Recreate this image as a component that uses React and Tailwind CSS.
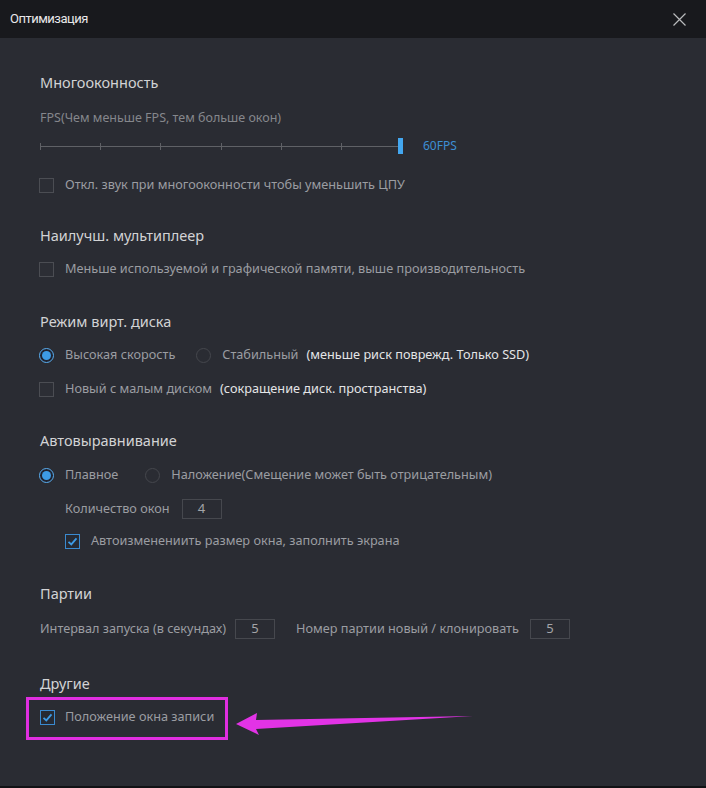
import { useState } from "react";

function Check({ checked }) {
    return (
        <span
            className={`flex h-[15px] w-[15px] shrink-0 items-center justify-center border ${
                checked ? "border-[#3a8ad0] bg-[#262a33]" : "border-[#4b4d53] bg-[#2c2e35]"
            }`}
        >
            {checked && (
                <svg width="11" height="11" viewBox="0 0 11 11">
                    <path d="M1.5 5.8 L4.3 8.4 L9.5 2.4" fill="none" stroke="#3d9be6" strokeWidth="1.8" />
                </svg>
            )}
        </span>
    );
}

function Radio({ checked }) {
    return (
        <span
            className={`flex h-[15px] w-[15px] shrink-0 items-center justify-center rounded-full border ${
                checked ? "border-[#5aaef0] bg-[#1f2330]" : "border-[#45474d]"
            }`}
        >
            {checked && <span className="h-[9px] w-[9px] rounded-full bg-[#3d9be6]" />}
        </span>
    );
}

function Heading({ children, className = "" }) {
    return <div className={`h-[20px] text-[14.5px] leading-[20px] text-[#d2d3d5] ${className}`}>{children}</div>;
}

function Box({ value }) {
    return (
        <span className="flex h-[20px] w-[40px] items-center justify-center border border-[#46484e] text-[13px] text-[#a3a4a8]">
            {value}
        </span>
    );
}

export default function App() {
    const [fps] = useState(60);
    const ticks = [0, 1, 2, 3, 4, 5];

    return (
        <div
            className="relative h-[788px] w-[706px] overflow-hidden border-b-2 border-[#111215] bg-[#2a2c33] text-[12.7px] text-[#9b9da2]"
            style={{ fontFamily: '"Noto Sans", "Open Sans", sans-serif' }}
        >
            <div className="flex h-[38px] items-center justify-between bg-[#18191d] pl-[10px] pr-[20px]">
                <span className="text-[13px] tracking-[-0.5px] text-[#e8e8ea]" style={{ fontFamily: "Roboto, sans-serif" }}>
                    Оптимизация
                </span>
                <svg width="13" height="13" viewBox="0 0 13 13">
                    <path d="M0.5 0.5 L12.5 12.5 M12.5 0.5 L0.5 12.5" stroke="#b9babd" strokeWidth="1.2" />
                </svg>
            </div>

            <div className="flex flex-col pl-[40px] pt-[34px]">
                <Heading>Многооконность</Heading>
                <div className="mt-[18px] h-[16px] text-[12.5px] leading-[16px] text-[#85878c]">
                    FPS(Чем меньше FPS, тем больше окон)
                </div>
                <div className="mt-[12px] flex h-[16px] items-center">
                    <div className="relative flex h-[16px] w-[358px] items-center">
                        <div className="h-px w-full bg-[#5f6166]" />
                        <div className="absolute inset-0 flex items-center justify-between pr-[56px]">
                            {ticks.map((t) => (
                                <span key={t} className="h-[7px] w-px bg-[#5f6166]" />
                            ))}
                        </div>
                    </div>
                    <span className="h-[16px] w-[5px] bg-[#43a7f0]" />
                    <span className="ml-[20px] text-[12px] text-[#3d8fd3]">{fps}FPS</span>
                </div>
                <label className="mt-[23px] flex h-[16px] items-center gap-[11px] -ml-px">
                    <Check />
                    Откл. звук при многооконности чтобы уменьшить ЦПУ
                </label>

                <Heading className="mt-[32px]">Наилучш. мультиплеер</Heading>
                <label className="mt-[16px] flex h-[16px] items-center gap-[11px] -ml-px">
                    <Check />
                    Меньше используемой и графической памяти, выше производительность
                </label>

                <Heading className="mt-[34px]">Режим вирт. диска</Heading>
                <div className="mt-[16px] flex h-[16px] items-center -ml-px">
                    <Radio checked />
                    <span className="ml-[11px]">Высокая скорость</span>
                    <span className="ml-[21px]">
                        <Radio />
                    </span>
                    <span className="ml-[11px]">Стабильный</span>
                    <span className="ml-[8px] text-[#e4e5e7]">(меньше риск поврежд. Только SSD)</span>
                </div>
                <div className="mt-[18px] flex h-[16px] items-center -ml-px">
                    <Check />
                    <span className="ml-[11px]">Новый с малым диском</span>
                    <span className="ml-[8px] text-[#e4e5e7]">(сокращение диск. пространства)</span>
                </div>

                <Heading className="mt-[33px]">Автовыравнивание</Heading>
                <div className="mt-[17px] flex h-[16px] items-center -ml-px">
                    <Radio checked />
                    <span className="ml-[11px]">Плавное</span>
                    <span className="ml-[27px]">
                        <Radio />
                    </span>
                    <span className="ml-[11px]">Наложение(Смещение может быть отрицательным)</span>
                </div>
                <div className="ml-[25px] mt-[16px] flex h-[20px] items-center gap-[12px]">
                    Количество окон
                    <Box value="4" />
                </div>
                <label className="ml-[25px] mt-[14px] flex h-[16px] items-center gap-[11px]">
                    <Check checked />
                    Автоизменениить размер окна, заполнить экрана
                </label>

                <Heading className="mt-[34px]">Партии</Heading>
                <div className="mt-[16px] flex h-[20px] items-center">
                    Интервал запуска (в секундах)
                    <span className="ml-[9px]">
                        <Box value="5" />
                    </span>
                    <span className="ml-[21px]">Номер партии новый / клонировать</span>
                    <span className="ml-[11px]">
                        <Box value="5" />
                    </span>
                </div>

                <Heading className="mt-[34px]">Другие</Heading>
                <div className="-ml-[14px] mt-[4px] w-[202px] border-[3px] border-[#e02ee0] pb-[12px] pl-[11px] pt-[9px]">
                    <label className="flex h-[16px] items-center gap-[10px]">
                        <Check checked />
                        Положение окна записи
                    </label>
                </div>
            </div>

            <svg className="absolute left-0 top-0" width="706" height="788" viewBox="0 0 706 788">
                <polygon points="236,724 257,713 256,720 473,716 256,729 259,735" fill="#e233e6" />
            </svg>
        </div>
    );
}
